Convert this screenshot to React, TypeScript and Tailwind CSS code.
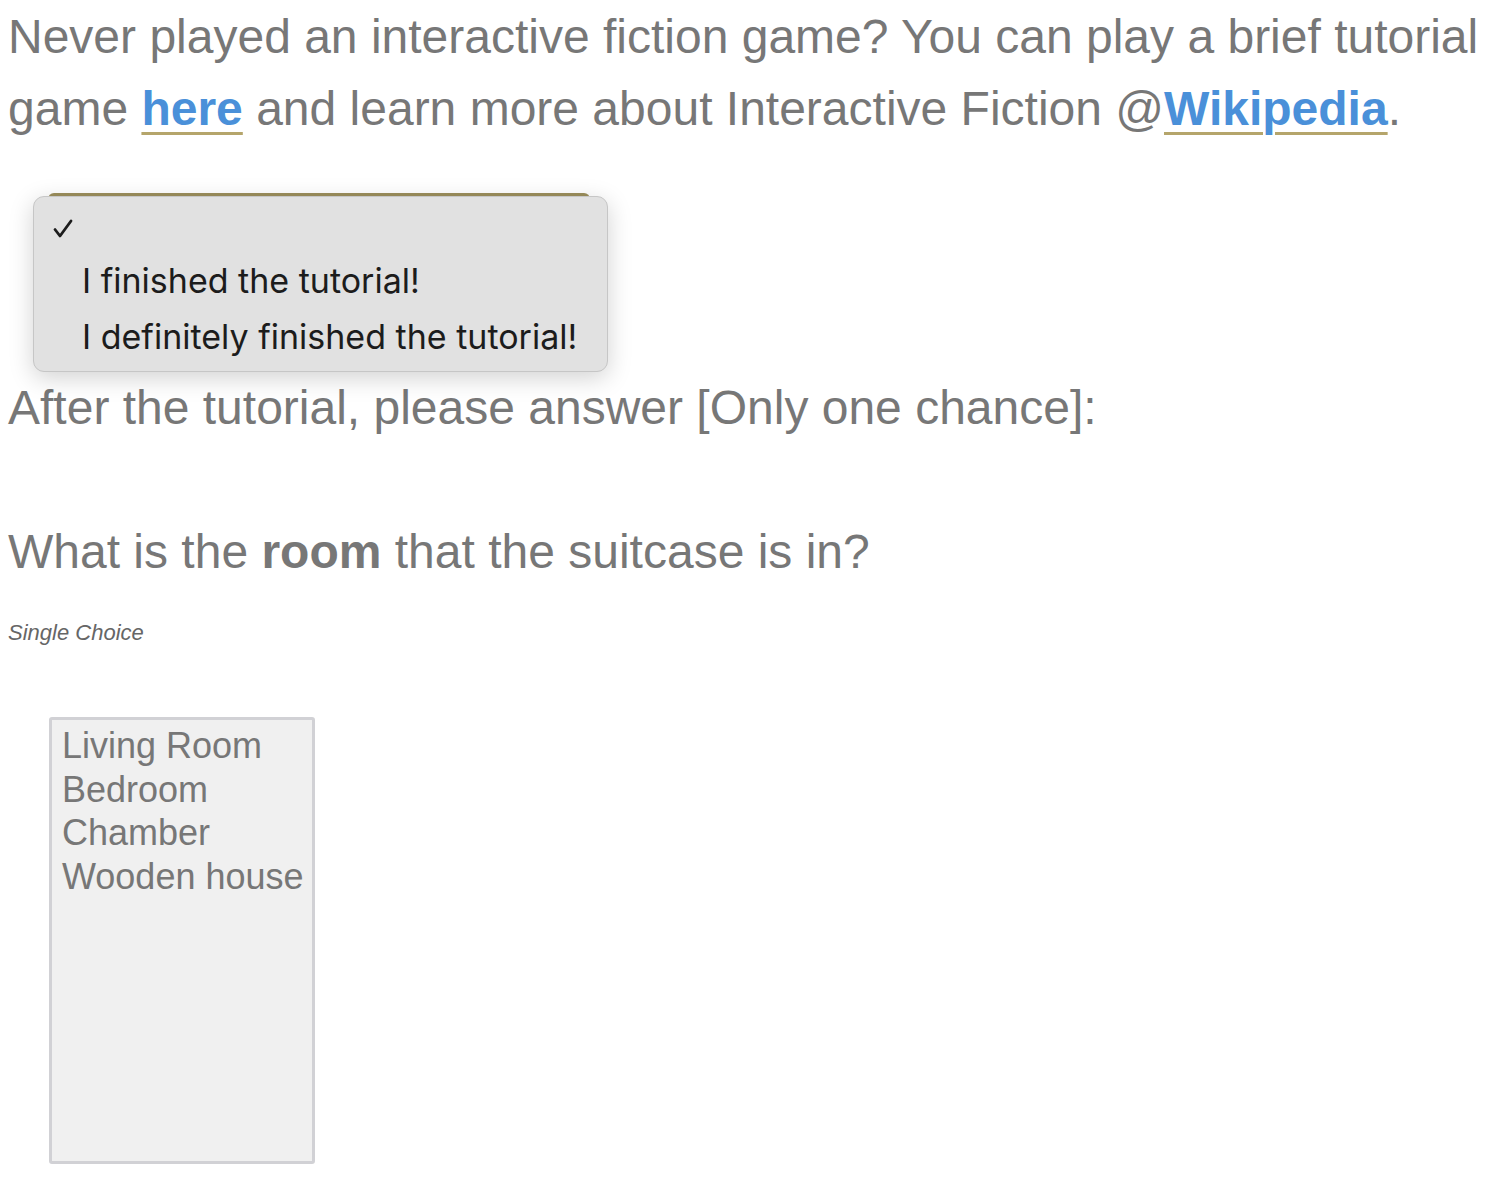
import { useState } from "react";

const options = ["Living Room", "Bedroom", "Chamber", "Wooden house"];

export default function App() {
  const [picked, setPicked] = useState<string | null>(null);

  return (
    <div className="min-h-[1190px] bg-white pl-[8px] text-[#777] font-['Liberation_Sans',Arial,sans-serif]">
      <p className="pt-[1px] text-[48px] leading-[72px]">
        Never played an interactive fiction game? You can play a brief tutorial game{" "}
        <a className="font-bold text-[#4a90d9] underline decoration-[#b5a56b] decoration-[3px] underline-offset-[7px]">
          here
        </a>{" "}
        and learn more about Interactive Fiction @
        <a className="font-bold text-[#4a90d9] underline decoration-[#b5a56b] decoration-[3px] underline-offset-[7px]">
          Wikipedia
        </a>
        .
      </p>

      {/* closed select with its open popup menu on top */}
      <div className="relative h-[227px] pt-[48px]">
        <div className="ml-[40px] h-[40px] w-[542px] rounded-t-md border-t-[3px] border-[#9c8f5c] bg-[#f4f4f4]" />
        <div className="absolute left-[25px] top-[51px] w-[575px] h-[176px] rounded-[11px] border border-[#c6c6c6] bg-[#e1e1e1] shadow-[0_6px_24px_rgba(0,0,0,0.18)] font-['Inter','Noto_Sans',sans-serif] text-[#1c1c1c] text-[34px]">
          <div className="flex h-[56px] items-center pl-[19px] pt-[7px]">
            <svg width="20" height="19" viewBox="0 0 20 19" fill="none" stroke="#1c1c1c" strokeWidth="2.8" strokeLinecap="round" strokeLinejoin="round">
              <path d="M2 10.5 L7 17 L18 2" />
            </svg>
          </div>
          <div className="pl-[48px] leading-[56px]">I finished the tutorial!</div>
          <div className="pl-[48px] leading-[56px]">I definitely finished the tutorial!</div>
        </div>
      </div>

      <p className="text-[48px] leading-[72px]">
        After the tutorial, please answer [Only one chance]:
        <br />
        <br />
        What is the <b>room</b> that the suitcase is in?
      </p>

      <p className="mt-[28px] text-[22px] italic text-[#666]">Single Choice</p>

      <div className="ml-[41px] mt-[68px] h-[447px] w-[266px] rounded-[3px] border-[3px] border-[#d1d1d5] bg-[#f0f0f0] pl-[10px] pr-[4px] pt-[4px]">
        {options.map((o) => (
          <div
            key={o}
            onClick={() => setPicked(o)}
            className={`whitespace-nowrap text-[36px] leading-[43.6px] ${picked === o ? "bg-[#ccc]" : ""}`}
          >
            {o}
          </div>
        ))}
      </div>
    </div>
  );
}
